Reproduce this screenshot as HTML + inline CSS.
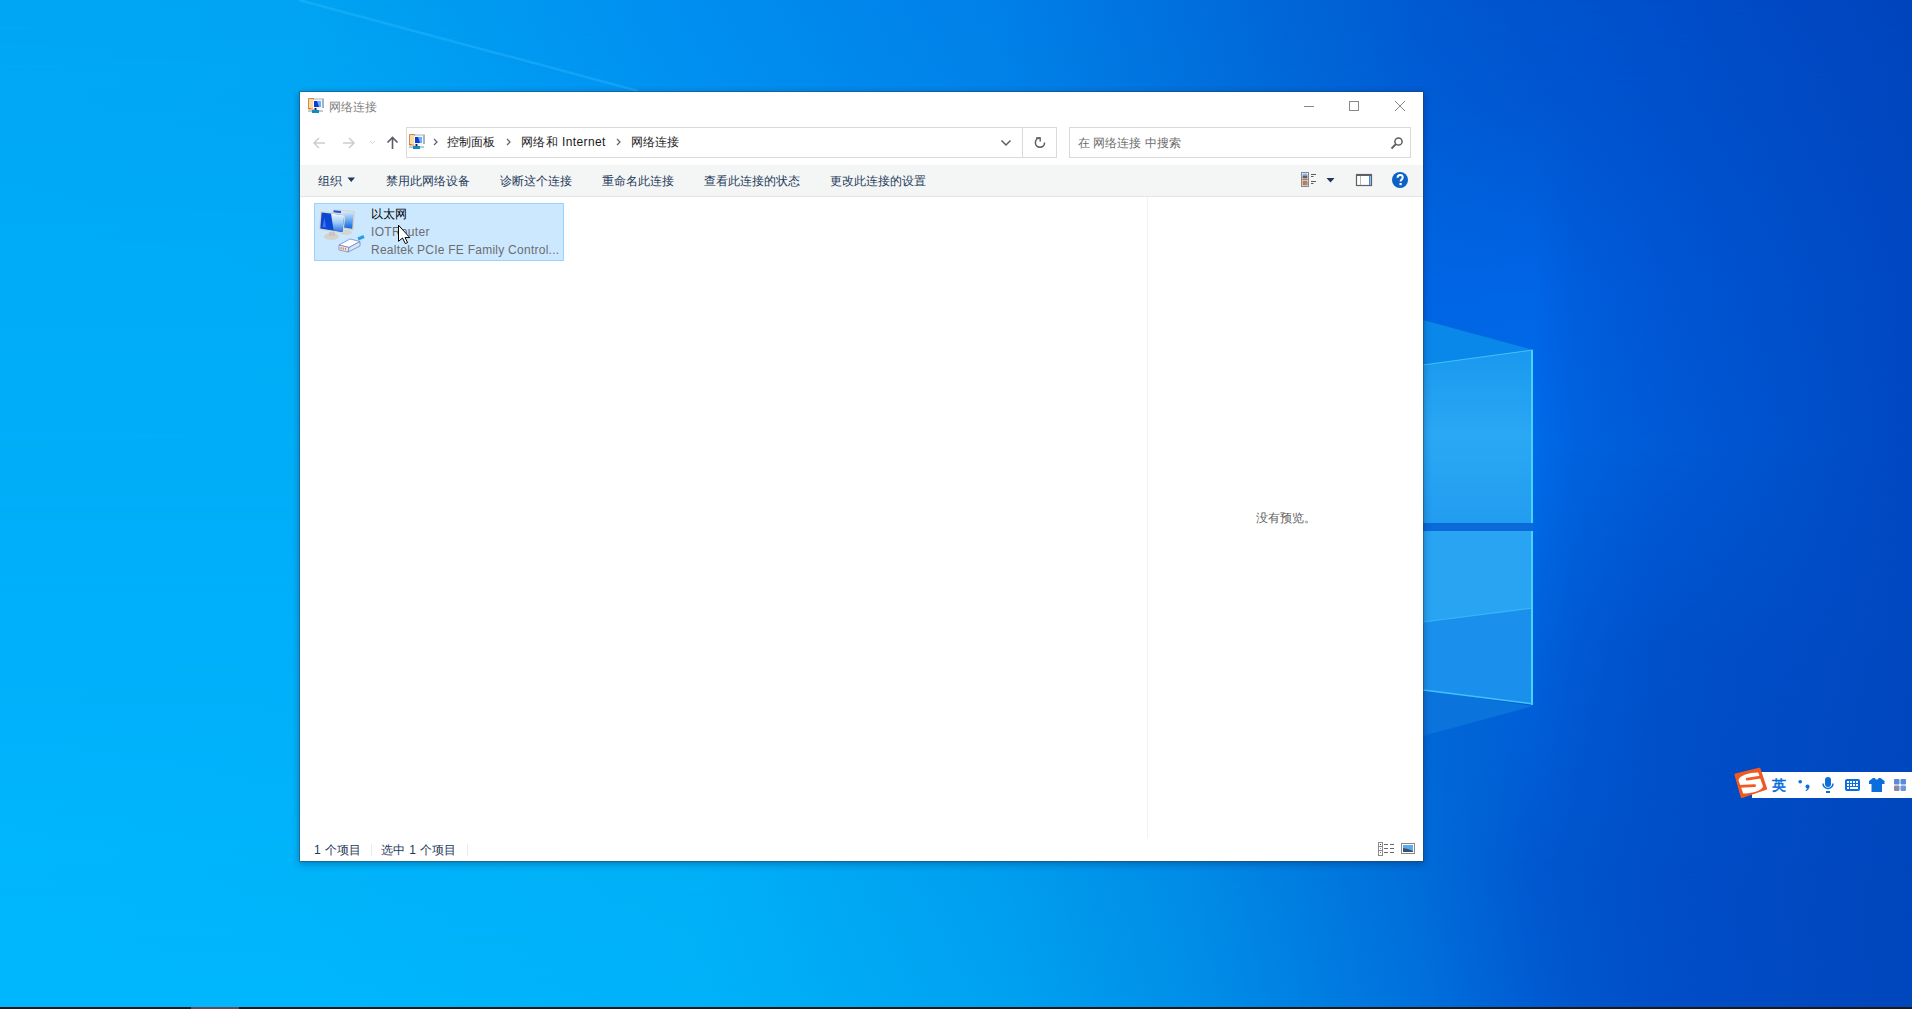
<!DOCTYPE html>
<html><head><meta charset="utf-8">
<style>
html,body{margin:0;padding:0;width:1912px;height:1009px;overflow:hidden;position:relative;font-family:"Liberation Sans",sans-serif;background:#0a50c6;}
svg{display:block;}
.abs{position:absolute;}
#bg{position:absolute;left:0;top:0;}
#win{position:absolute;left:299px;top:91px;width:1123px;height:769px;border:1px solid rgba(50,60,75,0.42);background:#fff;background-clip:padding-box;box-shadow:0 2px 7px rgba(0,20,60,0.32);}
.t{position:absolute;white-space:nowrap;font-size:12px;line-height:16px;}
.tb{color:#1e395b;}
</style></head><body>
<svg id="bg" width="1912" height="1009" viewBox="0 0 1912 1009">
<defs><linearGradient id="r0" gradientUnits="userSpaceOnUse" x1="0" y1="0" x2="1912" y2="0"><stop offset="0.0000" stop-color="#00a6f4"/><stop offset="0.1569" stop-color="#00a4f2"/><stop offset="0.3661" stop-color="#008ef0"/><stop offset="0.5230" stop-color="#0080e8"/><stop offset="0.6276" stop-color="#006edc"/><stop offset="0.7442" stop-color="#005ad2"/><stop offset="0.8018" stop-color="#0054ce"/><stop offset="0.8237" stop-color="#0052cd"/><stop offset="0.8682" stop-color="#004ecb"/><stop offset="1.0000" stop-color="#0044bc"/></linearGradient>
<linearGradient id="r1" gradientUnits="userSpaceOnUse" x1="0" y1="0" x2="1912" y2="0"><stop offset="0.0000" stop-color="#00a8f6"/><stop offset="0.1569" stop-color="#00a6f4"/><stop offset="0.3661" stop-color="#0090f0"/><stop offset="0.5230" stop-color="#0082e8"/><stop offset="0.6276" stop-color="#0070dc"/><stop offset="0.7442" stop-color="#005cd4"/><stop offset="0.8018" stop-color="#0056d0"/><stop offset="0.8237" stop-color="#0054cf"/><stop offset="0.8682" stop-color="#0050cc"/><stop offset="1.0000" stop-color="#0046be"/></linearGradient>
<linearGradient id="r2" gradientUnits="userSpaceOnUse" x1="0" y1="0" x2="1912" y2="0"><stop offset="0.0000" stop-color="#00acf8"/><stop offset="0.1569" stop-color="#00acf6"/><stop offset="0.3661" stop-color="#009cf0"/><stop offset="0.5230" stop-color="#0088e6"/><stop offset="0.6276" stop-color="#0076dc"/><stop offset="0.7442" stop-color="#0066e4"/><stop offset="0.8018" stop-color="#0066e6"/><stop offset="0.8237" stop-color="#005edc"/><stop offset="0.8682" stop-color="#0056d4"/><stop offset="1.0000" stop-color="#0048c2"/></linearGradient>
<linearGradient id="r3" gradientUnits="userSpaceOnUse" x1="0" y1="0" x2="1912" y2="0"><stop offset="0.0000" stop-color="#00aef8"/><stop offset="0.1569" stop-color="#00aef8"/><stop offset="0.3661" stop-color="#00a0f0"/><stop offset="0.5230" stop-color="#008ae6"/><stop offset="0.6276" stop-color="#0078dc"/><stop offset="0.7442" stop-color="#0068dc"/><stop offset="0.8018" stop-color="#006ce8"/><stop offset="0.8237" stop-color="#0062de"/><stop offset="0.8682" stop-color="#005ad6"/><stop offset="1.0000" stop-color="#0048c2"/></linearGradient>
<linearGradient id="r4" gradientUnits="userSpaceOnUse" x1="0" y1="0" x2="1912" y2="0"><stop offset="0.0000" stop-color="#00b0fa"/><stop offset="0.1569" stop-color="#00b0fa"/><stop offset="0.3661" stop-color="#00a4f2"/><stop offset="0.5230" stop-color="#008ee6"/><stop offset="0.6276" stop-color="#007adc"/><stop offset="0.7442" stop-color="#0066d6"/><stop offset="0.8018" stop-color="#0062dc"/><stop offset="0.8237" stop-color="#005ad4"/><stop offset="0.8682" stop-color="#0050ca"/><stop offset="1.0000" stop-color="#0048c0"/></linearGradient>
<linearGradient id="r5" gradientUnits="userSpaceOnUse" x1="0" y1="0" x2="1912" y2="0"><stop offset="0.0000" stop-color="#00b6fc"/><stop offset="0.1569" stop-color="#00b4fa"/><stop offset="0.3661" stop-color="#00b0f8"/><stop offset="0.5230" stop-color="#009eee"/><stop offset="0.6276" stop-color="#008ae6"/><stop offset="0.7442" stop-color="#006cd8"/><stop offset="0.8018" stop-color="#0058d0"/><stop offset="0.8237" stop-color="#0054cc"/><stop offset="0.8682" stop-color="#004ec8"/><stop offset="1.0000" stop-color="#0046bc"/></linearGradient>
<linearGradient id="r6" gradientUnits="userSpaceOnUse" x1="0" y1="0" x2="1912" y2="0"><stop offset="0.0000" stop-color="#00b6fc"/><stop offset="0.1569" stop-color="#00b6fc"/><stop offset="0.3661" stop-color="#00b2f8"/><stop offset="0.5230" stop-color="#00a2f0"/><stop offset="0.6276" stop-color="#008ee8"/><stop offset="0.7442" stop-color="#0070dc"/><stop offset="0.8018" stop-color="#005cd2"/><stop offset="0.8237" stop-color="#0056cc"/><stop offset="0.8682" stop-color="#004ec8"/><stop offset="1.0000" stop-color="#0046bc"/></linearGradient>
<linearGradient id="m0" gradientUnits="userSpaceOnUse" x1="0" y1="0" x2="0" y2="91"><stop offset="0" stop-color="#fff" stop-opacity="0"/><stop offset="1" stop-color="#fff" stop-opacity="1"/></linearGradient>
<mask id="k0" maskUnits="userSpaceOnUse" x="0" y="0" width="1912" height="91"><rect x="0" y="0" width="1912" height="91" fill="url(#m0)"/></mask>
<linearGradient id="m1" gradientUnits="userSpaceOnUse" x1="0" y1="91" x2="0" y2="300"><stop offset="0" stop-color="#fff" stop-opacity="0"/><stop offset="1" stop-color="#fff" stop-opacity="1"/></linearGradient>
<mask id="k1" maskUnits="userSpaceOnUse" x="0" y="91" width="1912" height="209"><rect x="0" y="91" width="1912" height="209" fill="url(#m1)"/></mask>
<linearGradient id="m2" gradientUnits="userSpaceOnUse" x1="0" y1="300" x2="0" y2="450"><stop offset="0" stop-color="#fff" stop-opacity="0"/><stop offset="1" stop-color="#fff" stop-opacity="1"/></linearGradient>
<mask id="k2" maskUnits="userSpaceOnUse" x="0" y="300" width="1912" height="150"><rect x="0" y="300" width="1912" height="150" fill="url(#m2)"/></mask>
<linearGradient id="m3" gradientUnits="userSpaceOnUse" x1="0" y1="450" x2="0" y2="640"><stop offset="0" stop-color="#fff" stop-opacity="0"/><stop offset="1" stop-color="#fff" stop-opacity="1"/></linearGradient>
<mask id="k3" maskUnits="userSpaceOnUse" x="0" y="450" width="1912" height="190"><rect x="0" y="450" width="1912" height="190" fill="url(#m3)"/></mask>
<linearGradient id="m4" gradientUnits="userSpaceOnUse" x1="0" y1="640" x2="0" y2="861"><stop offset="0" stop-color="#fff" stop-opacity="0"/><stop offset="1" stop-color="#fff" stop-opacity="1"/></linearGradient>
<mask id="k4" maskUnits="userSpaceOnUse" x="0" y="640" width="1912" height="221"><rect x="0" y="640" width="1912" height="221" fill="url(#m4)"/></mask>
<linearGradient id="m5" gradientUnits="userSpaceOnUse" x1="0" y1="861" x2="0" y2="1009"><stop offset="0" stop-color="#fff" stop-opacity="0"/><stop offset="1" stop-color="#fff" stop-opacity="1"/></linearGradient>
<mask id="k5" maskUnits="userSpaceOnUse" x="0" y="861" width="1912" height="148"><rect x="0" y="861" width="1912" height="148" fill="url(#m5)"/></mask></defs>
<rect x="0" y="0" width="1912" height="92" fill="url(#r0)"/>
<rect x="0" y="0" width="1912" height="91" fill="url(#r1)" mask="url(#k0)"/>
<rect x="0" y="91" width="1912" height="210" fill="url(#r1)"/>
<rect x="0" y="91" width="1912" height="209" fill="url(#r2)" mask="url(#k1)"/>
<rect x="0" y="300" width="1912" height="151" fill="url(#r2)"/>
<rect x="0" y="300" width="1912" height="150" fill="url(#r3)" mask="url(#k2)"/>
<rect x="0" y="450" width="1912" height="191" fill="url(#r3)"/>
<rect x="0" y="450" width="1912" height="190" fill="url(#r4)" mask="url(#k3)"/>
<rect x="0" y="640" width="1912" height="222" fill="url(#r4)"/>
<rect x="0" y="640" width="1912" height="221" fill="url(#r5)" mask="url(#k4)"/>
<rect x="0" y="861" width="1912" height="148" fill="url(#r5)"/>
<rect x="0" y="861" width="1912" height="148" fill="url(#r6)" mask="url(#k5)"/>
  <defs>
    <linearGradient id="pt" x1="0" y1="0" x2="0" y2="1">
      <stop offset="0" stop-color="#1a98ee"/>
      <stop offset="0.5" stop-color="#2aa8f4"/>
      <stop offset="1" stop-color="#229cf0"/>
    </linearGradient>
  </defs>
  <line x1="299" y1="0" x2="638" y2="91" stroke="#3cc0ff" stroke-width="2.4" opacity="0.32"/>
  <polygon points="1533,350 1423,320 1423,365" fill="#0a88ea"/>
  <polygon points="1423,690 1533,706 1423,736" fill="#0a74dc"/>
  <polygon points="1423,365 1533,350 1533,523 1423,523" fill="url(#pt)"/>
  <rect x="1423" y="523" width="110" height="8" fill="#0a6ad8"/>
  <polygon points="1423,531 1533,531 1533,608 1423,622" fill="#28a4f2"/>
  <polygon points="1423,622 1533,608 1533,704 1423,690" fill="#1a90ec"/>
  <line x1="1423" y1="622" x2="1533" y2="608" stroke="#38b8f8" stroke-width="1.2"/>
  <line x1="1532" y1="350" x2="1532" y2="523" stroke="#48d4ff" stroke-width="2"/>
  <line x1="1532" y1="531" x2="1532" y2="705" stroke="#48d4ff" stroke-width="2"/>
  <line x1="1423" y1="365" x2="1533" y2="350" stroke="#40c4fa" stroke-width="1"/>
  <line x1="1423" y1="690" x2="1533" y2="704" stroke="#40c4fa" stroke-width="1.5"/>

</svg>

<div id="win"></div>

<!-- title bar -->
<svg class="abs" style="left:308px;top:98px" width="16" height="16" viewBox="0 0 16 16">
  <polygon points="0.5,0.5 6,0.5 6,11 0.5,11" fill="#f8dca0" stroke="#d08850" stroke-width="1"/>
  <rect x="0.5" y="10" width="2" height="1" fill="#e06030"/>
  <rect x="6" y="0" width="10" height="9" fill="#d4d8de"/>
  <rect x="5" y="2" width="9" height="9" fill="#f4f6f8"/>
  <rect x="6" y="3" width="7" height="6" fill="#0c3cd0"/>
  <polygon points="9,3 13,3 13,9 11,9" fill="#6ab0f8"/>
  <rect x="14" y="1" width="2" height="9" fill="#a8b4c4"/>
  <rect x="0" y="12" width="15" height="2" fill="#c0ccc8"/>
  <rect x="4" y="12" width="7" height="3" fill="#1488c0"/>
  <rect x="6.5" y="10" width="2" height="2" fill="#1a2a40"/>
</svg>
<div class="t" style="left:329px;top:99px;color:#808080">网络连接</div>
<svg class="abs" style="left:1300px;top:98px" width="110" height="16" viewBox="0 0 110 16">
  <line x1="4" y1="8.5" x2="14" y2="8.5" stroke="#888" stroke-width="1"/>
  <rect x="49.5" y="3.5" width="9" height="9" fill="none" stroke="#888" stroke-width="1"/>
  <line x1="95" y1="3" x2="105" y2="13" stroke="#888" stroke-width="1"/>
  <line x1="105" y1="3" x2="95" y2="13" stroke="#888" stroke-width="1"/>
</svg>

<!-- nav bar -->
<svg class="abs" style="left:306px;top:130px" width="100" height="26" viewBox="0 0 100 26">
  <g stroke="#cdcdcd" stroke-width="1.5" fill="none">
    <path d="M19 13 H8 M13 8 L8 13 L13 18"/>
    <path d="M37 13 H48 M43 8 L48 13 L43 18"/>
  </g>
  <path d="M64 11 L66.5 13.5 L69 11" stroke="#d6d6d6" stroke-width="1" fill="none"/>
  <g stroke="#5f5a66" stroke-width="1.6" fill="none">
    <path d="M86.5 19 V8 M81.5 12.5 L86.5 7.5 L91.5 12.5"/>
  </g>
</svg>
<div class="abs" style="left:406px;top:127px;width:649px;height:29px;border:1px solid #d9d9d9;"></div>
<div class="abs" style="left:1022px;top:128px;width:1px;height:29px;background:#d9d9d9;"></div>
<svg class="abs" style="left:409px;top:134px" width="16" height="16" viewBox="0 0 16 16">
  <polygon points="0.5,0.5 6,0.5 6,11 0.5,11" fill="#f8dca0" stroke="#d08850" stroke-width="1"/>
  <rect x="0.5" y="10" width="2" height="1" fill="#e06030"/>
  <rect x="6" y="0" width="10" height="9" fill="#d4d8de"/>
  <rect x="5" y="2" width="9" height="9" fill="#f4f6f8"/>
  <rect x="6" y="3" width="7" height="6" fill="#0c3cd0"/>
  <polygon points="9,3 13,3 13,9 11,9" fill="#6ab0f8"/>
  <rect x="14" y="1" width="2" height="9" fill="#a8b4c4"/>
  <rect x="0" y="12" width="15" height="2" fill="#c0ccc8"/>
  <rect x="4" y="12" width="7" height="3" fill="#1488c0"/>
  <rect x="6.5" y="10" width="2" height="2" fill="#1a2a40"/>
</svg>
<svg class="abs" style="left:430px;top:136px" width="200" height="12" viewBox="0 0 200 12">
  <g stroke="#6a6570" stroke-width="1.3" fill="none">
    <path d="M4 3 L7 6 L4 9"/>
    <path d="M77 3 L80 6 L77 9"/>
    <path d="M187 3 L190 6 L187 9"/>
  </g>
</svg>
<div class="t" style="left:447px;top:134px;color:#1a1a1a">控制面板</div>
<div class="t" style="left:521px;top:134px;color:#1a1a1a;letter-spacing:0.4px">网络和 Internet</div>
<div class="t" style="left:631px;top:134px;color:#1a1a1a">网络连接</div>
<svg class="abs" style="left:995px;top:134px" width="60" height="18" viewBox="0 0 60 18">
  <path d="M6.5 6.5 L11 11 L15.5 6.5" stroke="#605b66" stroke-width="1.5" fill="none"/>
  <path d="M45 4 A4.6 4.6 0 1 0 49.6 8.6" stroke="#605b66" stroke-width="1.5" fill="none"/>
  <path d="M41 4 H45.2 V7.5" stroke="#605b66" stroke-width="1.4" fill="none"/>
</svg>
<div class="abs" style="left:1069px;top:127px;width:340px;height:29px;border:1px solid #d9d9d9;"></div>
<div class="t" style="left:1078px;top:135px;color:#6d6d6d">在 网络连接 中搜索</div>
<svg class="abs" style="left:1389px;top:135px" width="16" height="16" viewBox="0 0 16 16">
  <circle cx="9.5" cy="6.5" r="3.6" stroke="#605b66" stroke-width="1.5" fill="none"/>
  <path d="M7 9 L2.5 13.5" stroke="#605b66" stroke-width="1.8"/>
</svg>

<!-- toolbar -->
<div class="abs" style="left:300px;top:165px;width:1123px;height:31px;background:#f4f6f5;"></div>
<div class="abs" style="left:300px;top:196px;width:1123px;height:1px;background:#e3e6e5;"></div>
<div class="t tb" style="left:318px;top:173px">组织</div>
<svg class="abs" style="left:346px;top:176px" width="10" height="8" viewBox="0 0 10 8"><path d="M1.5 1.5 H9 L5.25 6 Z" fill="#1e395b"/></svg>
<div class="t tb" style="left:386px;top:173px">禁用此网络设备</div>
<div class="t tb" style="left:500px;top:173px">诊断这个连接</div>
<div class="t tb" style="left:602px;top:173px">重命名此连接</div>
<div class="t tb" style="left:704px;top:173px">查看此连接的状态</div>
<div class="t tb" style="left:830px;top:173px">更改此连接的设置</div>
<svg class="abs" style="left:1300px;top:171px" width="40" height="18" viewBox="0 0 40 18">
  <rect x="1.5" y="1.5" width="7" height="7" fill="#fff" stroke="#8a8a8a"/>
  <rect x="2.5" y="2.5" width="5" height="2" fill="#7ab8f0"/>
  <rect x="2.5" y="4.5" width="5" height="3" fill="#6a5a60"/>
  <rect x="1.5" y="8.5" width="7" height="7" fill="#fff" stroke="#8a8a8a"/>
  <rect x="2.5" y="9.5" width="5" height="5" fill="#c87848"/>
  <rect x="5" y="11" width="2.5" height="3" fill="#8a90a8"/>
  <g stroke="#5f5a66" stroke-width="1"><path d="M11 3.5 H16 M11 5.5 H13.5 M11 10.5 H16 M11 12.5 H13.5"/></g>
  <path d="M26.5 7 H34.5 L30.5 11.5 Z" fill="#1e395b"/>
</svg>
<svg class="abs" style="left:1355px;top:173px" width="18" height="14" viewBox="0 0 18 14">
  <rect x="1.5" y="1.5" width="15" height="11" fill="#fff" stroke="#625d68" stroke-width="1.2"/>
  <rect x="1" y="1" width="16" height="2" fill="#625d68"/>
  <rect x="5" y="3" width="1" height="9" fill="#b8b8c0"/>
  <rect x="14" y="3" width="1.5" height="9" fill="#3a8ee6"/>
</svg>
<svg class="abs" style="left:1391px;top:171px" width="18" height="18" viewBox="0 0 18 18">
  <circle cx="9" cy="9" r="8" fill="#0c62c4"/>
  <path d="M6.6 6.8 C6.6 4.9 7.8 4 9.2 4 C10.8 4 11.7 5 11.7 6.4 C11.7 8.4 9.6 8.5 9.6 10.4" stroke="#fff" stroke-width="2" fill="none"/>
  <rect x="8.5" y="12" width="2.2" height="2.2" fill="#fff"/>
</svg>

<!-- content -->
<div class="abs" style="left:314px;top:203px;width:248px;height:56px;background:#cce8ff;border:1px solid #99d1ff;"></div>
<svg class="abs" style="left:315px;top:204px" width="52" height="54" viewBox="0 0 52 54">
  <defs>
    <linearGradient id="bs" x1="0" y1="0" x2="0" y2="1"><stop offset="0" stop-color="#e4f2ff"/><stop offset="0.45" stop-color="#7ab8f4"/><stop offset="1" stop-color="#1060e0"/></linearGradient>
    <linearGradient id="fs" x1="0" y1="0" x2="0" y2="1"><stop offset="0" stop-color="#f0f8ff"/><stop offset="0.5" stop-color="#9ccaf4"/><stop offset="1" stop-color="#2a70e4"/></linearGradient>
  </defs>
  <!-- back base -->
  <ellipse cx="31" cy="28.5" rx="6" ry="2.6" fill="#d4d4d0"/>
  <!-- back monitor -->
  <polygon points="17,5 40,7 38.5,26.5 29,25 29.5,9" fill="#d6d2ca"/>
  <polygon points="18.5,6.3 38.6,8 37.2,24.8 29,23.5 29.5,9.5 18.5,8.5" fill="url(#bs)"/>
  <polygon points="18.5,6.3 26,7 26,9 18.5,8.5" fill="#1a50d8"/>
  <!-- front base -->
  <ellipse cx="16.5" cy="32.5" rx="7.5" ry="3.6" fill="#d2d2ce"/>
  <rect x="14" y="28" width="6" height="4" fill="#c8c6c0"/>
  <!-- front monitor -->
  <polygon points="5.3,7 30.6,9.9 28.4,29.4 4,25.8" fill="#d8d4cc"/>
  <polygon points="6.6,8.6 29.2,11.2 27.4,27.9 5.3,24.6" fill="#0c46d4"/>
  <polygon points="16,9.6 29.2,11.2 27.4,27.9 18.6,26.6" fill="url(#fs)"/>
  <polygon points="7.5,23 9.5,13.5 11,23.5" fill="#4a8cf0" opacity="0.7"/>
  <!-- plug -->
  <path d="M43 35 L49 32.5" stroke="#2a9ee0" stroke-width="3"/>
  <polygon points="24,41 35,35 45,37.5 45,42 33,48 24,46" fill="#f2f6fa"/>
  <polygon points="24,41 35,35 45,37.5 34,43.5" fill="#ffffff" stroke="#5a78c8" stroke-width="0.7"/>
  <polygon points="24,41 34,43.5 33,48 24,46" fill="#e8ecf2" stroke="#6a7ab8" stroke-width="0.7"/>
  <polygon points="34,43.5 45,37.5 45,42 33,48" fill="#dce6f2" stroke="#5a78c8" stroke-width="0.7"/>
  <rect x="25.5" y="43" width="1.2" height="2.4" fill="#e08a40"/>
  <rect x="27.7" y="43.4" width="1.2" height="2.4" fill="#e08a40"/>
  <rect x="29.9" y="43.8" width="1.2" height="2.4" fill="#e08a40"/>
</svg>
<div class="t" style="left:371px;top:206px;color:#000">以太网</div>
<div class="t" style="left:371px;top:224px;color:#6d6d6d;letter-spacing:0.3px">IOTRouter</div>
<div class="t" style="left:371px;top:242px;color:#6d6d6d;letter-spacing:0.25px">Realtek PCIe FE Family Control...</div>
<!-- cursor -->
<svg class="abs" style="left:397px;top:224px" width="16" height="22" viewBox="0 0 16 22">
  <path d="M1.5 1.2 V17.3 L5.5 14 L8.3 19.6 L10.6 18.6 L8 13.6 H12.8 Z" fill="#fff" stroke="#000" stroke-width="1" stroke-linejoin="miter"/>
</svg>

<div class="abs" style="left:1147px;top:197px;width:1px;height:641px;background:#f2f2f2;"></div>
<div class="t" style="left:1256px;top:510px;color:#606060">没有预览。</div>

<!-- status bar -->
<div class="t tb" style="left:314px;top:842px;letter-spacing:0.3px">1 个项目</div>
<div class="abs" style="left:371px;top:844px;width:1px;height:12px;background:#ececec;"></div>
<div class="t tb" style="left:381px;top:842px;letter-spacing:0.3px">选中 1 个项目</div>
<div class="abs" style="left:467px;top:844px;width:1px;height:12px;background:#ececec;"></div>
<svg class="abs" style="left:1377px;top:841px" width="40" height="16" viewBox="0 0 40 16">
  <rect x="1.5" y="1.5" width="4" height="13" fill="#fff" stroke="#8a8a8a"/>
  <path d="M1.5 5.5 H5.5 M1.5 9.5 H5.5" stroke="#8a8a8a"/>
  <rect x="3" y="3" width="1" height="1" fill="#444"/>
  <rect x="3" y="7" width="1" height="1" fill="#4aa0f0"/>
  <rect x="3" y="11" width="1" height="1" fill="#e05020"/>
  <path d="M7 3.5 H11 M13 3.5 H17 M7 7.5 H11 M13 7.5 H17 M7 11.5 H11 M13 11.5 H17" stroke="#6a6570"/>
  <rect x="24.5" y="2.5" width="13" height="10" fill="#fff" stroke="#8a8a8a"/>
  <rect x="26" y="4" width="10" height="7" fill="#5aaaf0"/>
  <polygon points="26,7 31,8 36,10 36,11 26,11" fill="#3a5070"/>
</svg>

<!-- IME bar -->
<div class="abs" style="left:1752px;top:772px;width:160px;height:26px;background:#fff;"></div>
<svg class="abs" style="left:1732px;top:764px" width="38" height="38" viewBox="0 0 38 38">
  <polygon points="3.6,10.6 27.4,4.8 34,24.6 9.8,32.9" fill="#f05a22" stroke="#f05a22" stroke-width="2.2" stroke-linejoin="round"/>
  <path d="M6.6 16.5 C6.3 12, 17 8.6, 26.2 8.6 L31 22.6 C30 27, 19 29.6, 11.2 29.6 Z" fill="#fff"/>
  <path d="M15.2 13.8 L29.6 11.4 L30.6 14.2 L15.2 16.6 A1.4 1.4 0 0 1 15.2 13.8 Z" fill="#f05a22"/>
  <path d="M6.4 20.9 L22.6 20.3 A1.4 1.4 0 0 1 22.6 23.1 L7.3 23.7 Z" fill="#f05a22"/>
</svg>
<div class="abs" style="left:1772px;top:776px;font-size:14px;line-height:18px;color:#0b6fdb;-webkit-text-stroke:0.6px #0b6fdb;white-space:nowrap">英</div>
<svg class="abs" style="left:1795px;top:775px" width="117" height="22" viewBox="0 0 117 22">
  <circle cx="5.2" cy="6.8" r="1.8" fill="#0b6fdb"/>
  <circle cx="12.5" cy="11.5" r="2" fill="#0b6fdb"/><path d="M14.2 11.5 C14.5 13.5 13 15.5 10.8 16.3 L10.5 15.5 C11.8 14.5 12.4 13.5 12.3 12.5 Z" fill="#0b6fdb"/>
  <rect x="30" y="2" width="6" height="10" rx="3" fill="#0b6fdb"/>
  <path d="M28 8.5 A5 5 0 0 0 38 8.5" stroke="#0b6fdb" stroke-width="1.5" fill="none"/>
  <rect x="31" y="16" width="4" height="2" fill="#0b6fdb"/>
  <rect x="50" y="4" width="15" height="12" rx="2" fill="#0b6fdb"/>
  <g fill="#fff"><rect x="52" y="6" width="2" height="2"/><rect x="55" y="6" width="2" height="2"/><rect x="58" y="6" width="2" height="2"/><rect x="61" y="6" width="2" height="2"/>
  <rect x="52" y="9" width="2" height="2"/><rect x="55" y="9" width="2" height="2"/><rect x="58" y="9" width="2" height="2"/><rect x="61" y="9" width="2" height="2"/>
  <rect x="52" y="12" width="2" height="2"/><rect x="55" y="12" width="8" height="2"/></g>
  <path d="M74 6 L78 3 H80 C80.5 5 83 5 83.5 3 H85.5 L89.5 6 V9 L87 9 V17 H76.5 V9 L74 9 Z" fill="#0b6fdb"/>
  <rect x="99" y="4" width="5.5" height="5.5" rx="1" fill="#5a8ad8"/>
  <rect x="105.5" y="4" width="5.5" height="5.5" rx="1" fill="#5a8ad8"/>
  <rect x="99" y="10.5" width="5.5" height="5.5" rx="1" fill="#8a8aa0"/>
  <rect x="105.5" y="10.5" width="5.5" height="5.5" rx="1" fill="#6a98e0"/>
</svg>

<!-- taskbar sliver -->
<div class="abs" style="left:0;top:1007px;width:1912px;height:2px;background:#201814;"></div>
<div class="abs" style="left:191px;top:1007px;width:48px;height:2px;background:#5f4a55;"></div>
</body></html>
